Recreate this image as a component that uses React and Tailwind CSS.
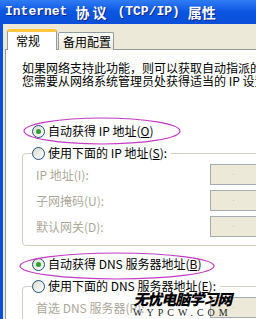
const cjk = { fontFamily: '"Noto Sans CJK SC", "Liberation Sans", sans-serif' };
const mono = { fontFamily: '"Liberation Mono", "Noto Sans CJK SC", monospace' };

function Radio({ checked }) {
  return (
    <span className="w-[13px] h-[13px] shrink-0 rounded-full border border-[#1c5180] bg-gradient-to-br from-[#dcd9cf] to-white flex items-center justify-center">
      {checked && <span className="w-[5px] h-[5px] rounded-full bg-[#2aa12a]" />}
    </span>
  );
}

function RadioRow({ checked, children, className = "" }) {
  return (
    <div className={"flex items-center gap-[3px] h-[14px] text-[12px] leading-[14px] text-black " + className}>
      <Radio checked={checked} />
      <span className="whitespace-nowrap">{children}</span>
    </div>
  );
}

function Field({ label }) {
  return (
    <div className="flex items-center h-[21px]">
      <span className="w-[187px] shrink-0 pl-[13px] text-[12px] text-[#aca899] whitespace-nowrap">{label}</span>
      <span className="w-[70px] h-[21px] shrink-0 border border-[#a5acb2] bg-[#ece9d8] flex items-center justify-center pr-[24px]">
        <span className="w-[1px] h-[1px] bg-[#c9c6b8]" />
      </span>
    </div>
  );
}

export default function App() {
  return (
    <div className="w-[256px] h-[319px] overflow-hidden relative flex flex-col bg-[#0a50dd]" style={cjk}>
      <div className="h-[24px] shrink-0 flex items-center pl-[5px] gap-[8px] text-white font-bold bg-gradient-to-b from-[#2f7cf5] via-[#0a55e0] to-[#0a4fd8] [text-shadow:1px_1px_0_#0a2a90]">
        <span className="text-[13px]" style={mono}>Internet</span>
        <span className="text-[14px] tracking-[3px]">协议</span>
        <span className="text-[13px]" style={mono}>(TCP/IP)</span>
        <span className="text-[14px]">属性</span>
      </div>
      <div className="flex-1 ml-[3px] bg-[#ece9d8] pl-[2px] pt-[5px] flex flex-col">
        <div className="flex items-end h-[21px] pl-[2px] relative z-10">
          <div className="w-[50px] h-[21px] bg-white border-x border-[#919b9c] border-t-[3px] border-t-[#ffc83c] rounded-t-[3px] text-[12px] leading-[18px] pl-[8px]">常规</div>
          <div className="w-[56px] h-[18px] bg-gradient-to-b from-white to-[#ece9d8] border border-b-0 border-[#919b9c] rounded-t-[2px] text-[12px] leading-[17px] pl-[4px] ml-[1px]">备用配置</div>
        </div>
        <div className="flex-1 -mt-[1px] bg-white border border-[#919b9c] border-r-0 pt-[11px] pl-[16px] overflow-hidden">
          <p className="text-[12px] leading-[13px] whitespace-nowrap text-black">
            如果网络支持此功能，则可以获取自动指派的 IP 设置。<br />
            您需要从网络系统管理员处获得适当的 IP 设置。
          </p>
          <RadioRow checked className="mt-[37px] ml-[10px]">自动获得 IP 地址(<u>O</u>)</RadioRow>
          <div className="mt-[15px] w-[260px] border border-[#d0d0bf] rounded-[4px] pb-[8px]">
            <RadioRow className="-mt-[8px] ml-[9px] w-fit bg-white pr-[4px]">使用下面的 IP 地址(<u>S</u>):</RadioRow>
            <div className="mt-[4px] flex flex-col gap-[5px]">
              <Field label="IP 地址(I):" />
              <Field label="子网掩码(U):" />
              <Field label="默认网关(D):" />
            </div>
          </div>
          <RadioRow checked className="mt-[11px] ml-[10px]">自动获得 DNS 服务器地址(<u>B</u>)</RadioRow>
          <div className="mt-[15px] w-[260px] border border-[#d0d0bf] rounded-[4px] pb-[8px]">
            <RadioRow className="-mt-[8px] ml-[9px] w-fit bg-white pr-[4px]">使用下面的 DNS 服务器地址(<u>E</u>):</RadioRow>
            <div className="mt-[4px] flex flex-col gap-[5px]">
              <Field label="首选 DNS 服务器(P):" />
              <Field label="备用 DNS 服务器(A):" />
            </div>
          </div>
        </div>
      </div>

      <svg className="absolute left-0 top-0 pointer-events-none" width="256" height="319">
        <ellipse cx="102" cy="131" rx="78" ry="13" fill="none" stroke="#c23cc2" strokeWidth="1.2" />
        <ellipse cx="117" cy="266" rx="97" ry="13" fill="none" stroke="#c23cc2" strokeWidth="1.2" />
      </svg>

      <div className="absolute left-[133px] top-[290px] flex flex-col items-center pointer-events-none">
        <span className="text-[15px] leading-[17px] font-black italic tracking-[-1px] text-black">无忧电脑学习网</span>
        <span className="text-[10px] leading-[11px] tracking-[4px] text-[#222]" style={{ fontFamily: '"Liberation Serif", serif' }}>WYPCW.COM</span>
      </div>
    </div>
  );
}
